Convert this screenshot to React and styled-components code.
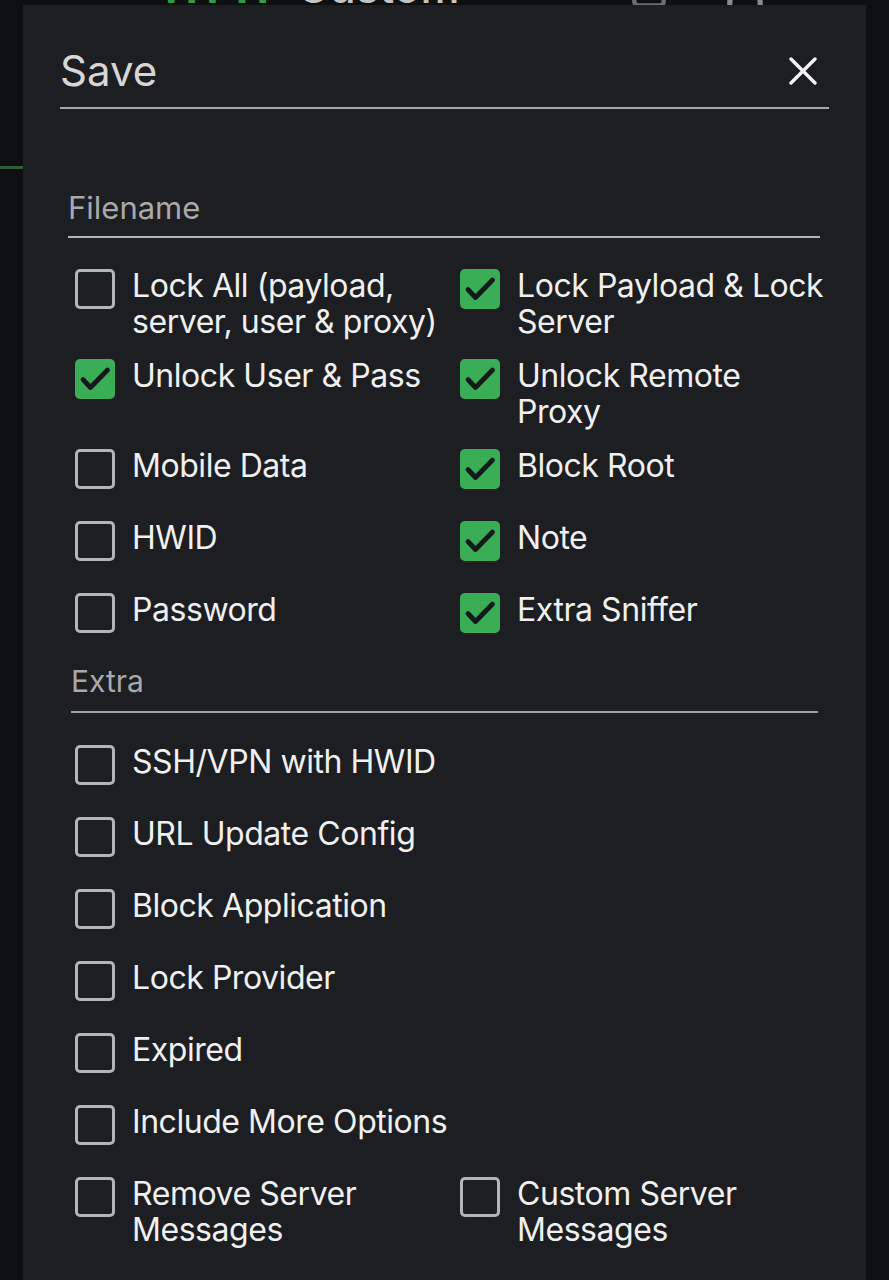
import React from 'react';
import styled, { createGlobalStyle } from 'styled-components';
import { FileText, User, ChevronDown } from 'lucide-react';

const GlobalStyle = createGlobalStyle`
  html, body {
    margin: 0;
    padding: 0;
    background: #0e0f10;
  }
`;

const filenameOptions = [
  { label: 'Lock All (payload,\nserver, user & proxy)', checked: false },
  { label: 'Lock Payload & Lock\nServer', checked: true },
  { label: 'Unlock User & Pass', checked: true },
  { label: 'Unlock Remote\nProxy', checked: true },
  { label: 'Mobile Data', checked: false },
  { label: 'Block Root', checked: true },
  { label: 'HWID', checked: false },
  { label: 'Note', checked: true },
  { label: 'Password', checked: false },
  { label: 'Extra Sniffer', checked: true },
];

const extraOptions = [
  { label: 'SSH/VPN with HWID', wide: true },
  { label: 'URL Update Config', wide: true },
  { label: 'Block Application', wide: true },
  { label: 'Lock Provider', wide: true },
  { label: 'Expired', wide: true },
  { label: 'Include More Options', wide: true },
  { label: 'Remove Server\nMessages' },
  { label: 'Custom Server\nMessages' },
];

function CheckItem({ label, checked, wide }) {
  return (
    <Item wide={wide}>
      <Box checked={checked}>
        {checked && (
          <svg width="40" height="40" viewBox="0 0 40 40">
            <path
              d="M8 20.5 L15.5 28.5 L32.5 11"
              fill="none"
              stroke="#16191b"
              strokeWidth="4.8"
              strokeLinecap="round"
              strokeLinejoin="round"
            />
          </svg>
        )}
      </Box>
      <Label>{label}</Label>
    </Item>
  );
}

export default function App() {
  return (
    <Page>
      <GlobalStyle />
      <AppBar>
        <Brand>
          <Green>HTTP</Green> Custom
        </Brand>
        <BarIcons>
          <FileText size={44} color="#6d6d6d" strokeWidth={2.4} />
          <User size={52} color="#8a8a8a" strokeWidth={2.4} />
          <ChevronDown size={30} color="#6d6d6d" strokeWidth={2.4} />
        </BarIcons>
      </AppBar>
      <TabIndicator />

      <Modal>
        <Header>
          <Title>Save</Title>
          <CloseButton aria-label="Close">
            <svg width="28" height="28" viewBox="0 0 28 28">
              <path
                d="M2 2 L26 26 M26 2 L2 26"
                stroke="#f4f4f4"
                strokeWidth="3.4"
                strokeLinecap="round"
              />
            </svg>
          </CloseButton>
        </Header>
        <HeaderRule />

        <FilenameField>Filename</FilenameField>

        <OptionGrid top={30}>
          {filenameOptions.map((o) => (
            <CheckItem key={o.label} {...o} />
          ))}
        </OptionGrid>

        <SectionLabel>Extra</SectionLabel>
        <SectionRule />

        <OptionGrid top={31}>
          {extraOptions.map((o) => (
            <CheckItem key={o.label} {...o} />
          ))}
        </OptionGrid>
      </Modal>
    </Page>
  );
}

const Page = styled.div`
  position: relative;
  height: 1280px;
  overflow: hidden;
  background: #0e0f10;
  font-family: Inter, 'Noto Sans', Roboto, sans-serif;
`;

const AppBar = styled.div`
  display: flex;
  align-items: center;
  justify-content: space-between;
  height: 48px;
  margin-top: -37px;
  padding: 0 40px 0 165px;
`;

const Brand = styled.div`
  font-size: 44px;
  line-height: 48px;
  font-weight: 500;
  color: #c4c4c4;
  white-space: nowrap;
`;

const Green = styled.span`
  color: #2f9a47;
  font-weight: 700;
`;

const BarIcons = styled.div`
  display: flex;
  align-items: center;
  gap: 48px;
`;

const TabIndicator = styled.div`
  width: 220px;
  margin-top: 155px;
  height: 3px;
  background: #2d5e38;
`;

const Modal = styled.div`
  position: absolute;
  top: 5px;
  left: 23px;
  right: 23px;
  bottom: 0;
  background: #1c1e22;
  display: flex;
  flex-direction: column;
`;

const Header = styled.div`
  display: flex;
  align-items: center;
  justify-content: space-between;
  padding: 42px 37px 0;
`;

const Title = styled.h2`
  margin: 0;
  font-size: 42px;
  line-height: 48px;
  font-weight: 400;
  color: #d6d6d6;
`;

const CloseButton = styled.button`
  display: flex;
  padding: 0;
  margin-right: 12px;
  border: none;
  background: none;
  cursor: pointer;
`;

const HeaderRule = styled.div`
  margin: 12px 37px 0;
  height: 2px;
  background: #a8a8a8;
`;

const FilenameField = styled.div`
  margin: 81px 46px 0 45px;
  padding-bottom: 10px;
  font-size: 31px;
  line-height: 36px;
  color: #a9a9a9;
  border-bottom: 2px solid #b3b3b3;
`;

const OptionGrid = styled.div`
  display: grid;
  grid-template-columns: 1fr 1fr;
  margin: ${(p) => p.top}px 21px 0 52px;
`;

const Item = styled.div`
  grid-column: ${(p) => (p.wide ? '1 / -1' : 'auto')};
  display: flex;
  align-items: flex-start;
  gap: 17px;
  min-height: 72px;
  padding-bottom: 18px;
  box-sizing: border-box;
`;

const Box = styled.div`
  flex: none;
  width: 40px;
  height: 40px;
  margin-top: 1px;
  box-sizing: border-box;
  border-radius: 5px;
  border: ${(p) => (p.checked ? 'none' : '3px solid #b4b4b4')};
  background: ${(p) => (p.checked ? '#3aae56' : 'transparent')};
`;

const Label = styled.div`
  font-size: 32px;
  line-height: 36px;
  letter-spacing: -0.45px;
  color: #f0f0f0;
  white-space: pre-line;
`;

const SectionLabel = styled.div`
  margin: -1px 0 0 48px;
  font-size: 30px;
  line-height: 36px;
  color: #a9a9a9;
`;

const SectionRule = styled.div`
  margin: 12px 48px 0;
  height: 2px;
  background: #a0a0a0;
`;
